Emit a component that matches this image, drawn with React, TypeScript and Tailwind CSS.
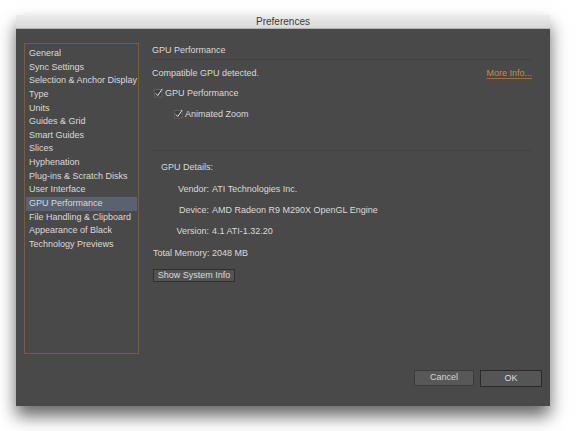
import React from 'react';

const sections = [
  'General',
  'Sync Settings',
  'Selection & Anchor Display',
  'Type',
  'Units',
  'Guides & Grid',
  'Smart Guides',
  'Slices',
  'Hyphenation',
  'Plug-ins & Scratch Disks',
  'User Interface',
  'GPU Performance',
  'File Handling & Clipboard',
  'Appearance of Black',
  'Technology Previews',
];

function CheckBox() {
  return (
    <svg width="10" height="10" viewBox="0 0 10 10" className="shrink-0">
      <rect x="0.5" y="1.5" width="7.5" height="7.5" fill="#3e3e3e" stroke="#606060" />
      <path
        d="M2 5.6 L3.8 7.6 L8 1.2"
        fill="none"
        stroke="#e0e0e0"
        strokeWidth="1"
        strokeLinecap="round"
        strokeLinejoin="round"
      />
    </svg>
  );
}

export default function App() {
  const selected = 'GPU Performance';

  return (
    <div
      className="h-[431px] w-[576px] overflow-hidden bg-white pl-[16px] pt-[15px] text-[9px] text-[#dadada]"
      style={{ fontFamily: '"Liberation Sans", Arial, sans-serif' }}
    >
      <div className="flex h-[391px] w-[534px] flex-col shadow-[0_10px_16px_rgba(0,0,0,0.6)]">
        {/* title bar */}
        <div className="flex h-[14px] items-center justify-center border-b border-[#b4b4b4] bg-gradient-to-b from-[#ececec] to-[#d8d8d8] text-[10px] text-[#3a3a3a]">
          Preferences
        </div>

        <div className="flex flex-1 flex-col bg-[#494949] px-[8px] pt-[14px]">
          <div className="flex h-[311px]">
            {/* section list */}
            <div className="w-[115px] border border-[#7c5b3d] p-[1px] pt-[3px]">
              {sections.map((s) => (
                <div
                  key={s}
                  className={`h-[13.64px] whitespace-nowrap pl-[3px] leading-[13.64px] ${
                    s === selected ? 'bg-[#5a6170]' : ''
                  }`}
                >
                  {s}
                </div>
              ))}
            </div>

            {/* panel */}
            <div className="ml-[13px] flex w-[380px] flex-col">
              <div className="leading-[14px]">GPU Performance</div>
              <div className="mt-[2px] h-px bg-[#424242]" />

              <div className="mt-[6px] flex items-center justify-between leading-[14px]">
                <span>Compatible GPU detected.</span>
                <span className="text-[#d18b3e] underline decoration-[#a86f32] underline-offset-2">
                  More Info...
                </span>
              </div>

              <div className="mt-[6px] ml-[2px] flex items-center gap-[1px] leading-[14px]">
                <CheckBox />
                <span>GPU Performance</span>
              </div>

              <div className="mt-[7px] ml-[22px] flex items-center gap-[1px] leading-[14px]">
                <CheckBox />
                <span>Animated Zoom</span>
              </div>

              <div className="mt-[29px] h-px bg-[#424242]" />

              <div className="mt-[9px] ml-[9px] leading-[14px]">GPU Details:</div>

              <div className="mt-[8px] grid grid-cols-[57px_1fr] gap-y-[7px] leading-[14px]">
                <span className="text-right">Vendor:</span>
                <span className="pl-[3px]">ATI Technologies Inc.</span>
                <span className="text-right">Device:</span>
                <span className="pl-[3px]">AMD Radeon R9 M290X OpenGL Engine</span>
                <span className="text-right">Version:</span>
                <span className="pl-[3px]">4.1 ATI-1.32.20</span>
              </div>

              <div className="mt-[8px] ml-[1px] leading-[14px]">Total Memory: 2048 MB</div>

              <div className="mt-[9px] ml-[1px]">
                <button
                  type="button"
                  className="h-[13px] w-[82px] border border-[#2f2f2f] bg-[#535353] text-[9px] leading-[11px] text-[#dcdcdc]"
                >
                  Show System Info
                </button>
              </div>
            </div>
          </div>

          {/* footer */}
          <div className="mt-[16px] flex justify-end gap-[6px]">
            <button
              type="button"
              className="h-[16px] w-[60px] border border-[#3a3a3a] bg-[#585858] text-[9px] text-[#d4d4d4]"
            >
              Cancel
            </button>
            <button
              type="button"
              className="h-[17px] w-[62px] border-[1.5px] border-[#2a2a2a] bg-[#555555] text-[9px] text-[#dedede]"
            >
              OK
            </button>
          </div>
        </div>
      </div>
    </div>
  );
}
